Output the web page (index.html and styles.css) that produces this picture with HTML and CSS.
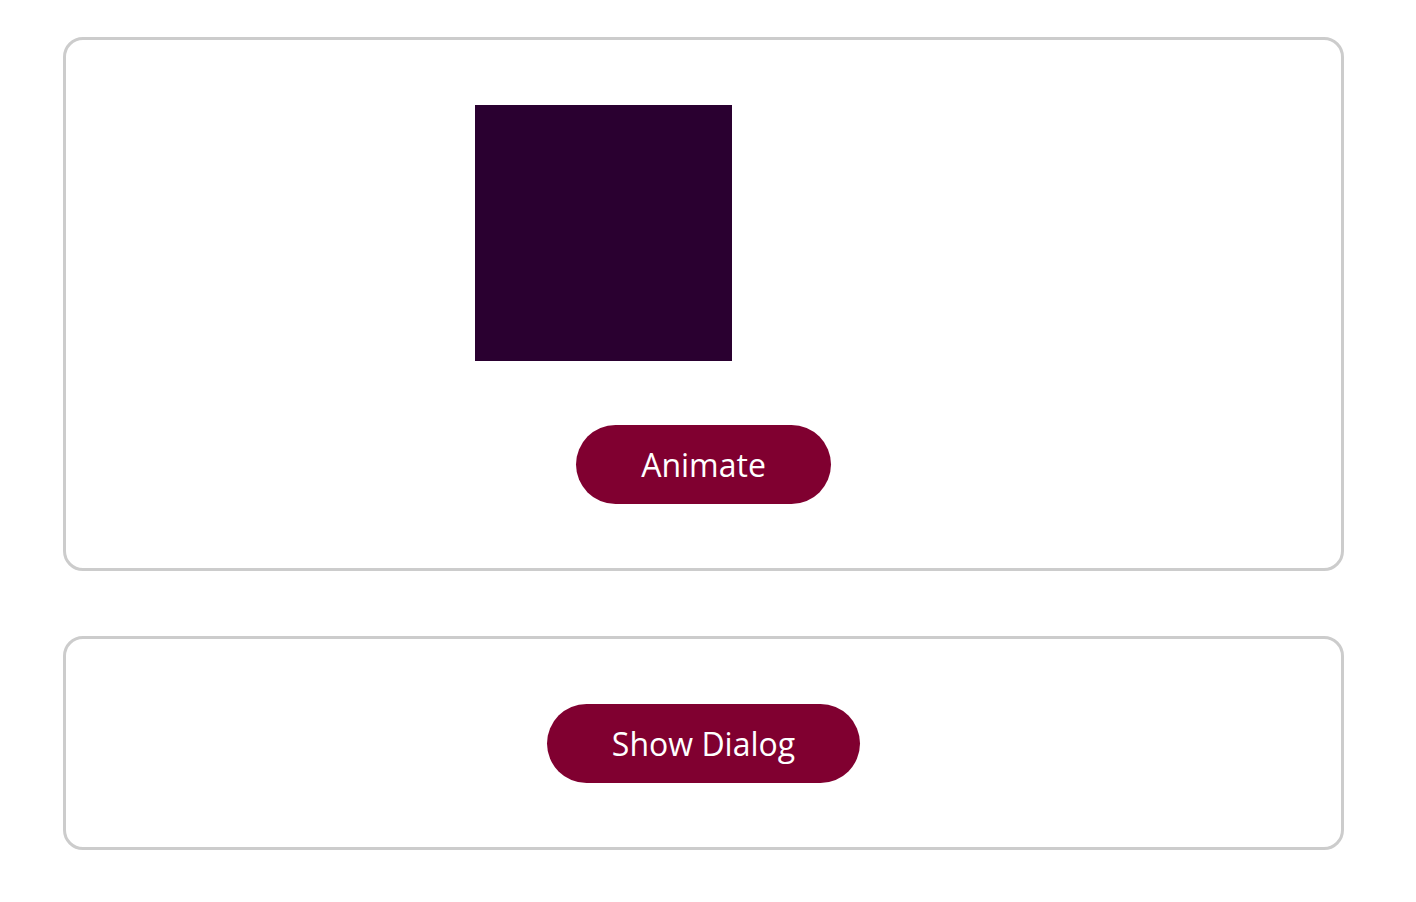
FILE: index.html
```html
<!DOCTYPE html>
<html>
<head>
<meta charset="utf-8">
<link rel="stylesheet" href="styles.css">
</head>
<body>
<main class="page">
  <section class="card card-anim">
    <div class="box"></div>
    <button class="btn">Animate</button>
  </section>
  <section class="card card-dialog">
    <button class="btn">Show Dialog</button>
  </section>
</main>
</body>
</html>
```

FILE: styles.css
```css
html, body {
  margin: 0;
  padding: 0;
  background: #ffffff;
}
.page {
  padding: 37px 0 0 63px;
  display: flex;
  flex-direction: column;
  gap: 65px;
  font-family: "Open Sans", "Noto Sans", sans-serif;
}
.card {
  box-sizing: border-box;
  width: 1281px;
  border: 3px solid #cccccc;
  border-radius: 20px;
  padding: 65px 0 64px;
  display: flex;
  flex-direction: column;
  align-items: center;
  gap: 64px;
}
.box {
  width: 257px;
  height: 256px;
  background: #2a0030;
  transform: translateX(-100px);
}
.btn {
  box-sizing: border-box;
  height: 79px;
  padding: 0 65px;
  border: none;
  border-radius: 40px;
  background: #800030;
  color: #ffffff;
  font-family: "Open Sans", "Noto Sans", sans-serif;
  font-size: 32px;
  display: inline-flex;
  align-items: center;
  justify-content: center;
}
```
